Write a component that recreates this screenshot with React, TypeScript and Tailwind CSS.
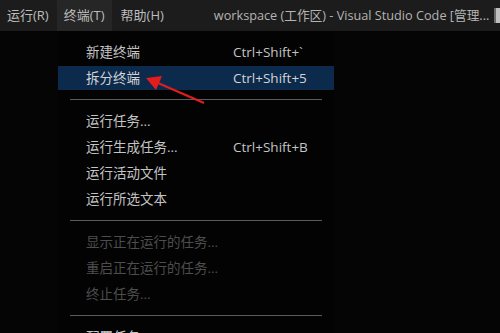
import React from "react";

const font = {
  fontFamily: '"Open Sans", "Noto Sans CJK SC", sans-serif',
};

type Item = { label: string; keys?: string; active?: boolean; disabled?: boolean };

const groups: Item[][] = [
  [
    { label: "新建终端", keys: "Ctrl+Shift+`" },
    { label: "拆分终端", keys: "Ctrl+Shift+5", active: true },
  ],
  [
    { label: "运行任务..." },
    { label: "运行生成任务...", keys: "Ctrl+Shift+B" },
    { label: "运行活动文件" },
    { label: "运行所选文本" },
  ],
  [
    { label: "显示正在运行的任务...", disabled: true },
    { label: "重启正在运行的任务...", disabled: true },
    { label: "终止任务...", disabled: true },
  ],
  [{ label: "配置任务..." }],
];

function Row({ item }: { item: Item }) {
  return (
    <div className="h-[26px] flex items-center">
      <div
        className={
          item.active
            ? "w-full h-[24px] flex items-center bg-[#0b2a4c] text-[#d4d4d4]"
            : item.disabled
            ? "w-full h-[24px] flex items-center text-[#4d4d4d]"
            : "w-full h-[24px] flex items-center text-[#c4c4c4]"
        }
      >
        <span className="pl-[28px] w-[175px] shrink-0 whitespace-nowrap">{item.label}</span>
        <span className="whitespace-nowrap">{item.keys}</span>
      </div>
    </div>
  );
}

export default function App() {
  return (
    <div
      className="relative w-[500px] h-[333px] bg-[#050505] overflow-hidden flex flex-col"
      style={font}
    >
      <div className="h-[31px] shrink-0 bg-[#1c1c1c] flex items-center text-[13px] text-[#bdbdbd]">
        <div className="h-full flex items-center pl-[7px] pr-[8px]">运行(R)</div>
        <div className="h-full flex items-center px-[7px] bg-[#262626]">终端(T)</div>
        <div className="h-full flex items-center px-[9px]">帮助(H)</div>
        <div className="ml-[41px] whitespace-nowrap text-[12.7px] text-[#b4b4b4]">
          workspace (工作区) - Visual Studio Code [管理...
        </div>
        <div className="ml-auto mr-[-4px] w-[10px] h-[15px] bg-[#bfbfbf] border-l-[2px] border-[#6a6a6a]" />
      </div>

      <div className="ml-[58px] w-[276px] pt-[8px] text-[13.5px] bg-[#030303]">
        {groups.map((g, gi) => (
          <div key={gi}>
            {gi > 0 && (
              <div className="h-[17px] flex items-center">
                <div className="mx-[12px] w-full h-px bg-[#5c5c5c]" />
              </div>
            )}
            {g.map((it) => (
              <Row key={it.label} item={it} />
            ))}
          </div>
        ))}
      </div>

      <svg
        className="absolute left-0 top-0 pointer-events-none"
        width="500"
        height="333"
        viewBox="0 0 500 333"
      >
        <line x1="204" y1="103" x2="158" y2="83" stroke="#e11d1d" strokeWidth="2.2" />
        <polygon points="146,78 162,76 156,90" fill="#e11d1d" />
      </svg>
    </div>
  );
}
